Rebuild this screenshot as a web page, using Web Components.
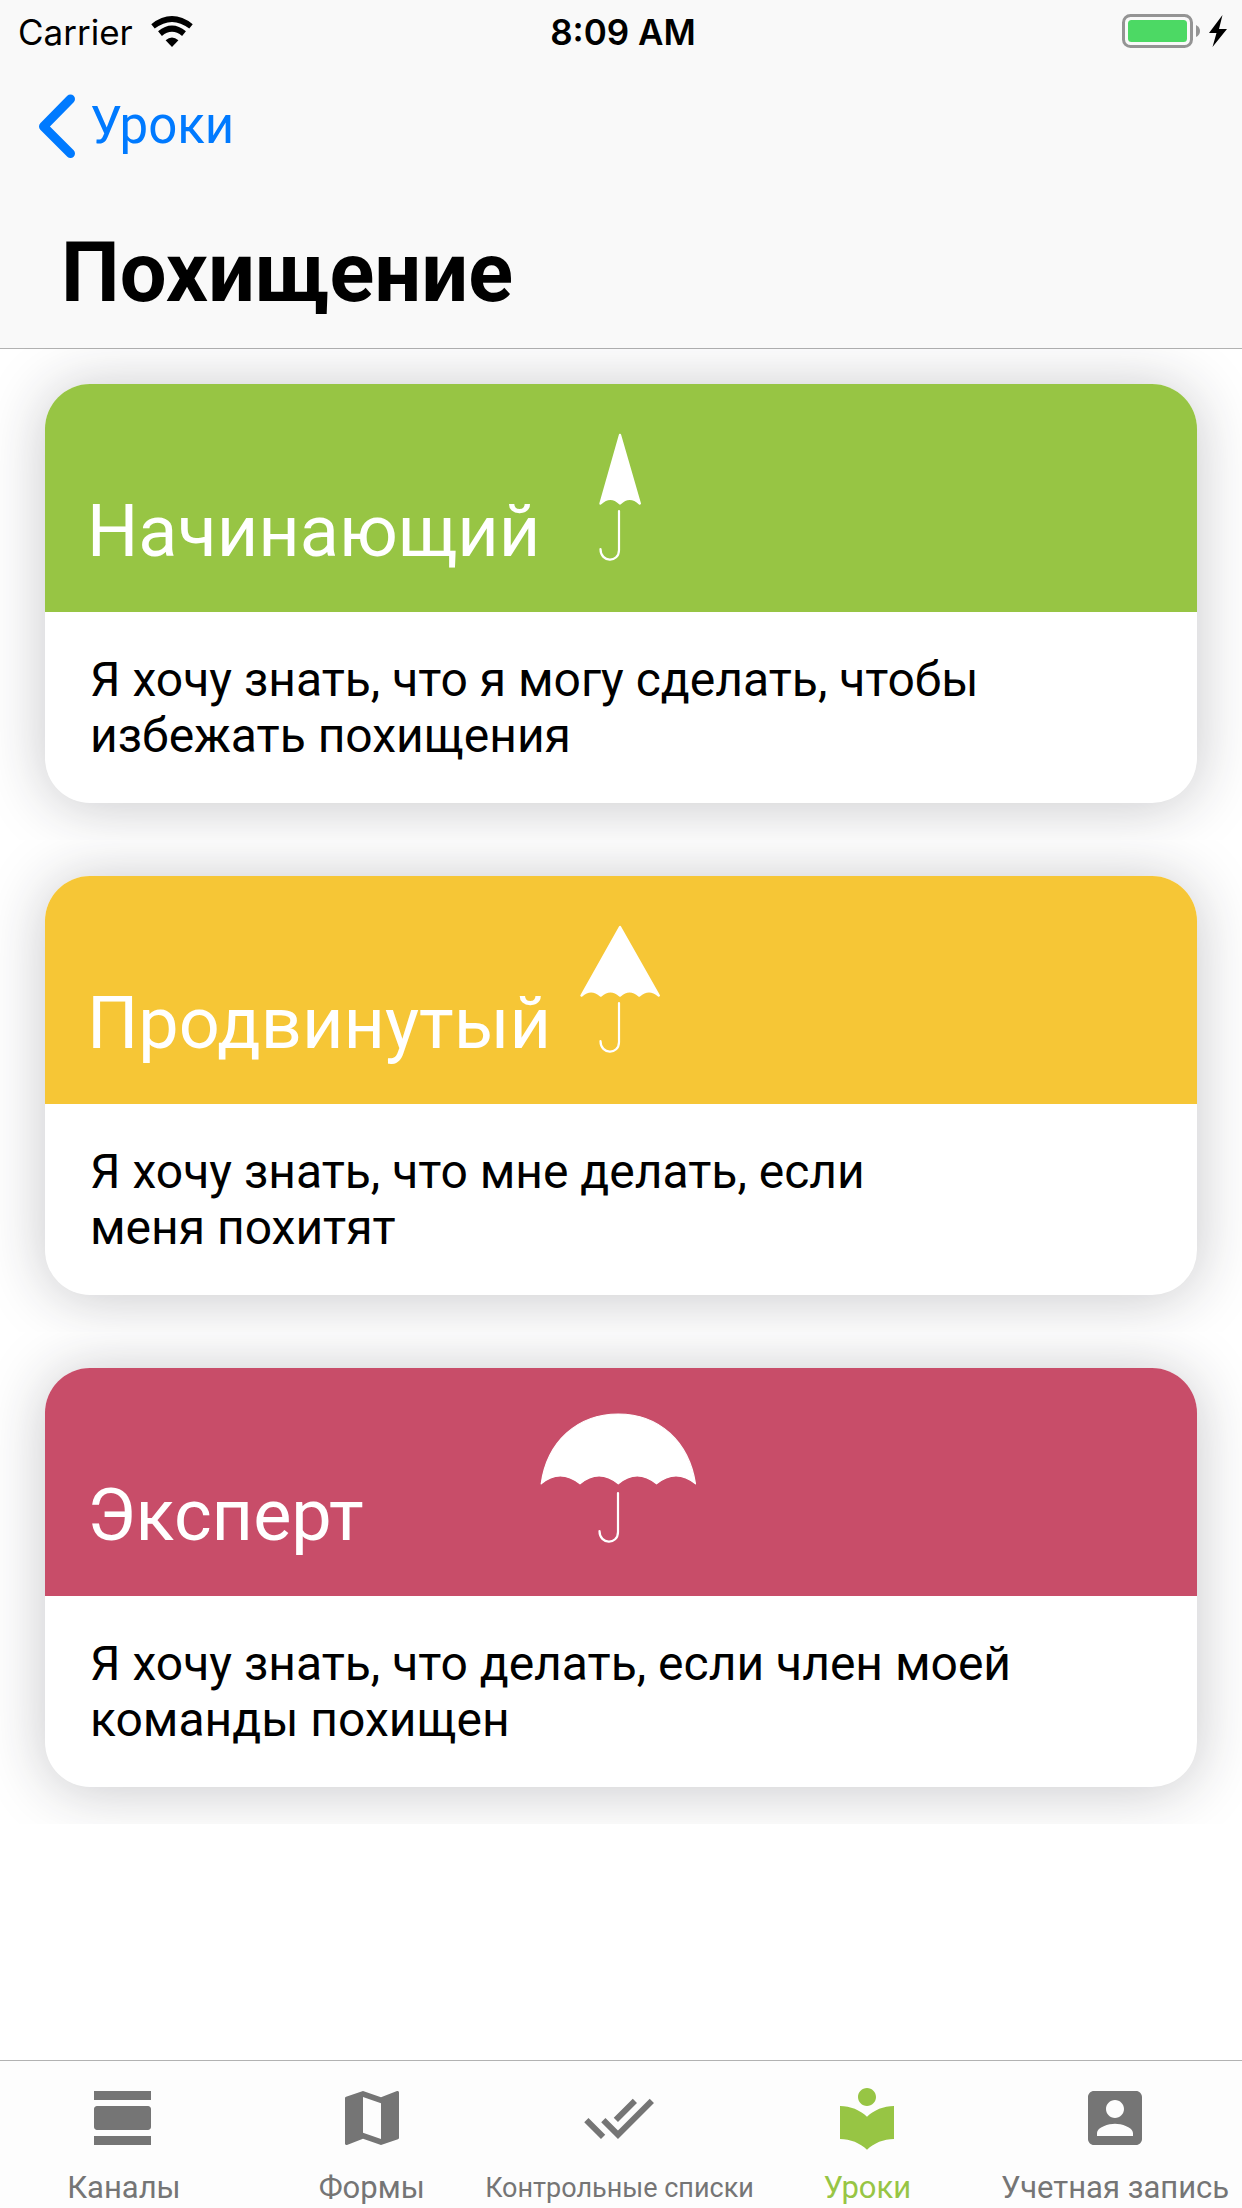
<!DOCTYPE html>
<html lang="ru">
<head>
<meta charset="utf-8">
<meta name="viewport" content="width=device-width, initial-scale=1">
<title>Похищение</title>
<style>
  html, body { margin: 0; background: #fff; }
  body { font-family: Roboto, "Noto Sans", sans-serif; color: #000; }
</style>
</head>
<body>
<lesson-app></lesson-app>
<script>
class StatusBar extends HTMLElement {
  connectedCallback() {
    this.attachShadow({ mode: 'open' }).innerHTML = `
      <style>
        :host { display: grid; grid-template-columns: 1fr auto 1fr; align-items: center; height: 60px; padding: 3px 14px 0 18px; box-sizing: border-box;
          font-family: Inter, Roboto, sans-serif; font-size: 35px; line-height: 42px; }
        .left, .right { display: flex; align-items: center; }
        .left { gap: 17px; }
        .right { justify-content: flex-end; }
        .time { font-weight: 600; }
        svg { display: block; }
      </style>
      <div class="left"><span>Carrier</span>
        <svg width="44" height="32" viewBox="0 0 44 32" aria-label="Wi-Fi">
          <path d="M22 31 L15.6 24.3 Q22 18.8 28.4 24.3Z"/>
          <path d="M10 17.6 Q22 7.6 34 17.6" fill="none" stroke="#000" stroke-width="6"/>
          <path d="M3 10.4 Q22 -4.4 41 10.4" fill="none" stroke="#000" stroke-width="5.6"/>
        </svg>
      </div>
      <span class="time">8:09 AM</span>
      <div class="right">
        <svg width="106" height="36" viewBox="0 0 106 36" aria-label="Battery">
          <rect x="1.5" y="1.5" width="68" height="31" rx="7" fill="none" stroke="#949494" stroke-width="3"/>
          <rect x="6" y="6" width="59" height="22" rx="3.5" fill="#4cd964"/>
          <path d="M74 11 Q78 13 78 17 T74 23Z" fill="#949494"/>
          <path d="M100.500 1 L87 19 H94.5 L90.500 33 L105 15 H97Z"/>
        </svg>
      </div>`;
  }
}

class NavHeader extends HTMLElement {
  connectedCallback() {
    this.attachShadow({ mode: 'open' }).innerHTML = `
      <style>
        :host { display: block; background: #f9f9f9; border-bottom: 1px solid #b2b2b2; }
        nav { display: flex; align-items: center; height: 132px; padding: 0 36px; }
        a { display: flex; align-items: center; gap: 13px; color: #007aff; text-decoration: none; font-size: 51px; line-height: 62px; }
        h1 { margin: 0; padding: 39px 61px 33px; font-size: 83px; line-height: 84px; font-weight: 700; }
        svg { display: block; }
      </style>
      <status-bar></status-bar>
      <nav><a href="#lessons">
        <svg width="41" height="66" viewBox="0 0 41 66" aria-hidden="true"><path d="M34.500 6 L7.500 33.500 L34.500 60.500" fill="none" stroke="#007aff" stroke-width="9" stroke-linecap="round" stroke-linejoin="round"/></svg>
        <span>${this.getAttribute('back')}</span></a></nav>
      <h1><slot></slot></h1>`;
  }
}

const HANDLE = '<path d="M88 90 V129 C88 142 69.500 142 69.500 128" fill="none" stroke="#fff" stroke-width="2.200" stroke-linecap="round"/>';
const UMBRELLAS = {
  closed: '<path d="M89 14 L69.500 82.500 Q79.500 73 89 82.500 Q98.500 73 108.800 82.500Z" fill="#fff" stroke="#fff" stroke-width="2.400" stroke-linejoin="round"/>' + HANDLE,
  half: '<path d="M89 14 L50.500 82.500 Q60 74 69.800 82.500 Q79.500 74 89 82.500 Q98.500 74 108.200 82.500 Q118 74 127.800 82.500Z" fill="#fff" stroke="#fff" stroke-width="2.400" stroke-linejoin="round"/>' + HANDLE,
  open: '<path d="M10.200 78.800 C16 37 46 9 87.300 9 C128.500 9 158 37 164.500 78.800 Q145 63 125.500 78.800 Q106 63 87.300 78.800 Q68 63 49 78.800 Q29 63 10.200 78.800Z" fill="#fff" stroke="#fff" stroke-width="1.200" stroke-linejoin="round"/><g transform="translate(-1 -2)">' + HANDLE + '</g>'
};

class LessonCard extends HTMLElement {
  connectedCallback() {
    this.attachShadow({ mode: 'open' }).innerHTML = `
      <style>
        :host { display: block; padding: 36px 45px 37px; overflow: hidden; }
        a { display: block; color: inherit; text-decoration: none; background: #fff; border-radius: 45px; box-shadow: 0 3px 60px rgba(30, 30, 45, .25); }
        header { display: grid; height: 228px; border-radius: 45px 45px 0 0; background: var(--level-color); color: #fff; }
        header > * { grid-area: 1 / 1; }
        h2 { margin: 0; align-self: end; padding: 0 42px 38px; font-size: 72px; line-height: 84px; font-weight: 400; }
        svg { display: block; justify-self: center; margin-top: 37px; }
        p { margin: 0; padding: 40px 45px 39px; font-size: 48px; line-height: 56px; }
      </style>
      <a href="#${this.getAttribute('level')}">
        <header>
          <h2>${this.getAttribute('heading')}</h2>
          <svg width="180" height="144" viewBox="0 0 180 144" aria-hidden="true">${UMBRELLAS[this.getAttribute('umbrella')]}</svg>
        </header>
        <p><slot></slot></p>
      </a>`;
  }
}

const ICONS = {
  channels: '<path d="M2 21h19v-3H2v3zM20 8H3c-.55 0-1 .45-1 1v6c0 .55.45 1 1 1h17c.55 0 1-.45 1-1V9c0-.55-.45-1-1-1zM2 3v3h19V3H2z"/>',
  forms: '<path d="M20.5 3l-.16.03L15 5.100 9 3 3.360 4.900c-.21.07-.36.25-.36.48V20.500c0 .28.22.5.5.5l.16-.03L9 18.900l6 2.100 5.640-1.900c.21-.07.36-.25.36-.48V3.500c0-.28-.22-.5-.5-.5zM15 19l-6-2.110V5l6 2.110V19z"/>',
  checks: '<path d="M18 7l-1.410-1.410-6.340 6.340 1.410 1.410L18 7zm4.240-1.410L11.660 16.170 7.480 12l-1.410 1.410L11.660 19l12-12-1.420-1.410zM.41 13.410L6 19l1.410-1.410L1.830 12 .41 13.410z"/>',
  lessons: '<path d="M12 11.550C9.640 9.350 6.480 8 3 8v11c3.480 0 6.640 1.350 9 3.550 2.360-2.190 5.520-3.550 9-3.550V8c-3.480 0-6.640 1.350-9 3.550zM12 8c1.660 0 3-1.340 3-3s-1.340-3-3-3-3 1.340-3 3 1.340 3 3 3z"/>',
  account: '<path d="M3 5v14c0 1.100.89 2 2 2h14c1.100 0 2-.9 2-2V5c0-1.100-.9-2-2-2H5c-1.110 0-2 .9-2 2zm12 4c0 1.660-1.340 3-3 3s-3-1.340-3-3 1.340-3 3-3 3 1.340 3 3zm-9 8c0-2 4-3.100 6-3.100s6 1.100 6 3.100v1H6v-1z"/>'
};

class TabItem extends HTMLElement {
  connectedCallback() {
    this.attachShadow({ mode: 'open' }).innerHTML = `
      <style>
        :host { display: block; flex: 1 1 0; min-width: 0; color: #757575; font-size: 31px; }
        :host([active]) { color: #97c544; }
        :host([compact]) { font-size: 27px; }
        a { display: flex; flex-direction: column; align-items: center; gap: 16px; color: inherit; text-decoration: none; line-height: 36px; white-space: nowrap; }
        svg { display: block; fill: currentColor; }
      </style>
      <a href="#${this.getAttribute('icon')}"${this.hasAttribute('active') ? ' aria-current="page"' : ''}>
        <svg width="72" height="72" viewBox="0 0 24 24" aria-hidden="true">${ICONS[this.getAttribute('icon')]}</svg>
        <span><slot></slot></span>
      </a>`;
  }
}

class TabBar extends HTMLElement {
  connectedCallback() {
    this.attachShadow({ mode: 'open' }).innerHTML = `
      <style>
        :host { display: block; background: #fdfdfd; border-top: 1px solid #b2b2b2; }
        nav { display: flex; padding: 21px 3px 2px 0; }
      </style>
      <nav><slot></slot></nav>`;
  }
}

class LessonApp extends HTMLElement {
  connectedCallback() {
    this.attachShadow({ mode: 'open' }).innerHTML = `
      <style>
        :host { display: flex; flex-direction: column; min-height: 100vh; }
        main { flex: 1; }
        nav-header { margin-bottom: -1px; }
        .green { --level-color: #97c544; }
        .yellow { --level-color: #f6c636; }
        .red { --level-color: #c84d69; }
      </style>
      <nav-header back="Уроки">Похищение</nav-header>
      <main>
        <lesson-card class="green" level="beginner" heading="Начинающий" umbrella="closed">Я хочу знать, что я могу сделать, чтобы избежать похищения</lesson-card>
        <lesson-card class="yellow" level="advanced" heading="Продвинутый" umbrella="half">Я хочу знать, что мне делать, если меня&nbsp;похитят</lesson-card>
        <lesson-card class="red" level="expert" heading="Эксперт" umbrella="open">Я хочу знать, что делать, если член моей команды похищен</lesson-card>
      </main>
      <tab-bar>
        <tab-item icon="channels">Каналы</tab-item>
        <tab-item icon="forms">Формы</tab-item>
        <tab-item icon="checks" compact>Контрольные списки</tab-item>
        <tab-item icon="lessons" active>Уроки</tab-item>
        <tab-item icon="account">Учетная запись</tab-item>
      </tab-bar>`;
  }
}

customElements.define('status-bar', StatusBar);
customElements.define('nav-header', NavHeader);
customElements.define('lesson-card', LessonCard);
customElements.define('tab-item', TabItem);
customElements.define('tab-bar', TabBar);
customElements.define('lesson-app', LessonApp);
</script>
</body>
</html>
